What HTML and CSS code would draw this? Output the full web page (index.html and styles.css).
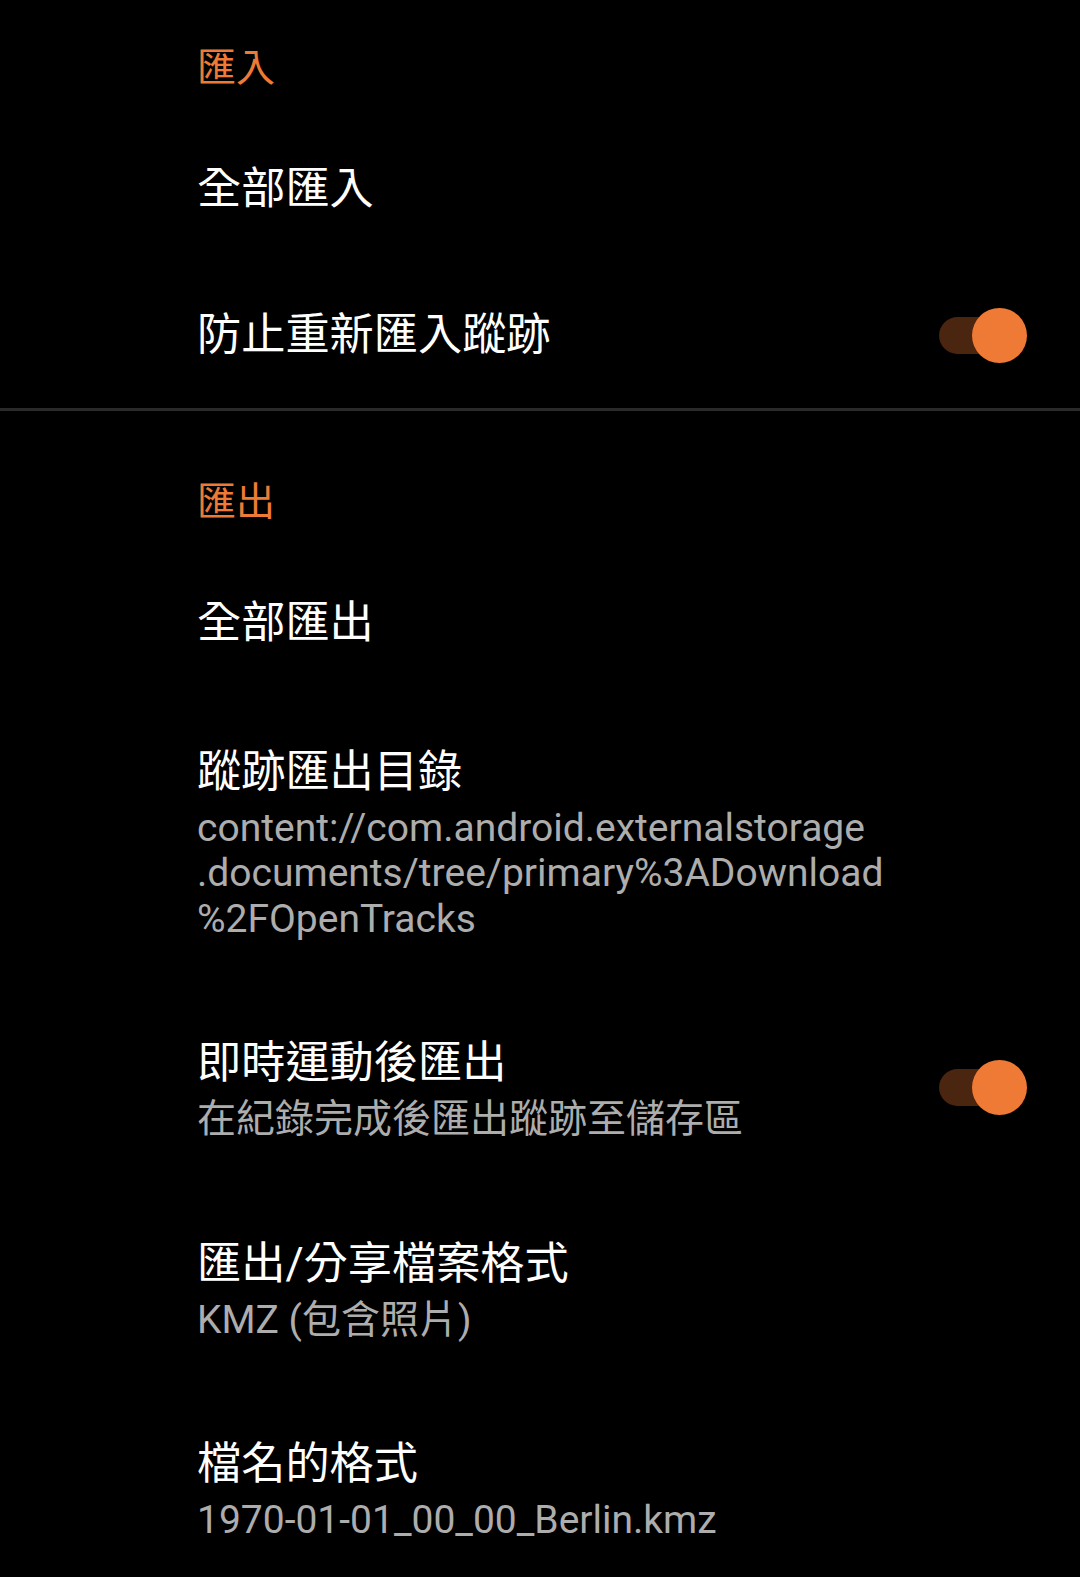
FILE: index.html
```html
<!DOCTYPE html>
<html lang="zh-Hant">
<head>
<meta charset="utf-8">
<title>匯入 / 匯出</title>
<link rel="stylesheet" href="styles.css">
</head>
<body>
<main class="settings">
  <section class="group group-first">
    <h2 class="group-title">匯入</h2>
    <div class="row">
      <div class="text"><div class="title">全部匯入</div></div>
    </div>
    <div class="row">
      <div class="text"><div class="title">防止重新匯入蹤跡</div></div>
      <div class="switch on"><span class="track"></span><span class="thumb"></span></div>
    </div>
  </section>
  <hr class="divider">
  <section class="group group-second">
    <h2 class="group-title">匯出</h2>
    <div class="row">
      <div class="text"><div class="title">全部匯出</div></div>
    </div>
    <div class="row two-line">
      <div class="text">
        <div class="title">蹤跡匯出目錄</div>
        <div class="summary">content://com.android.externalstorage<br>.documents/tree/primary%3ADownload<br>%2FOpenTracks</div>
      </div>
    </div>
    <div class="row two-line">
      <div class="text">
        <div class="title">即時運動後匯出</div>
        <div class="summary">在紀錄完成後匯出蹤跡至儲存區</div>
      </div>
      <div class="switch on"><span class="track"></span><span class="thumb"></span></div>
    </div>
    <div class="row two-line">
      <div class="text">
        <div class="title">匯出/分享檔案格式</div>
        <div class="summary">KMZ (包含照片)</div>
      </div>
    </div>
    <div class="row two-line">
      <div class="text">
        <div class="title">檔名的格式</div>
        <div class="summary">1970-01-01_00_00_Berlin.kmz</div>
      </div>
    </div>
  </section>
</main>
</body>
</html>
```

FILE: styles.css
```css
html, body {
  margin: 0;
  padding: 0;
  background: #000;
}

body {
  font-family: Roboto, "Noto Sans CJK TC", "Noto Sans", sans-serif;
  color: #fff;
  overflow: hidden;
}

.settings {
  display: flex;
  flex-direction: column;
  padding-top: 2px;
}

.group {
  display: flex;
  flex-direction: column;
}

.group-title {
  margin: 0;
  padding: 0 0 22px 197px;
  font-size: 39px;
  line-height: 52px;
  font-weight: 400;
  color: #ee7a35;
}

.group-first .group-title {
  padding-top: 40px;
}

.group-second .group-title {
  padding-top: 65px;
}

.row {
  display: flex;
  align-items: center;
  min-height: 146px;
  padding: 44px 53px 44px 197px;
  box-sizing: border-box;
}

.row.two-line .text {
  padding: 2.5px 0 1.5px;
}

.text {
  flex: 1;
  display: flex;
  flex-direction: column;
}

.title {
  font-size: 44.2px;
  line-height: 58px;
  color: #fff;
}

.summary {
  margin-top: 5px;
  font-size: 39px;
  line-height: 45.5px;
  color: #adadad;
}

.divider {
  margin: 0;
  border: 0;
  height: 3px;
  background: #2a2a2a;
}

.switch {
  position: relative;
  width: 88px;
  height: 55px;
  flex: none;
}

.switch .track {
  position: absolute;
  left: 0;
  top: 9px;
  width: 84px;
  height: 37px;
  border-radius: 18.5px;
  background: #4a2510;
}

.switch .thumb {
  position: absolute;
  right: 0;
  top: 0;
  width: 55px;
  height: 55px;
  border-radius: 50%;
  background: #ee7a35;
}
```
